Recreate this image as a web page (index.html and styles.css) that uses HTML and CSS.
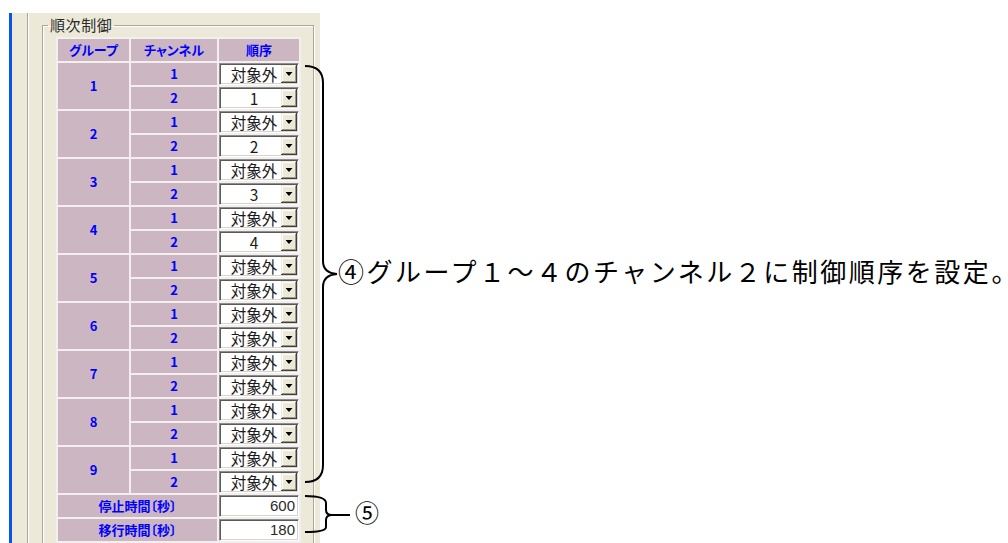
FILE: index.html
```html
<!DOCTYPE html>
<html lang="ja">
<head>
<meta charset="utf-8">
<title>順次制御</title>
<link rel="stylesheet" href="styles.css">
</head>
<body>
<div class="page">
  <div class="gutter"></div>
  <div class="window">
    <div class="rail"></div>
    <div class="pane">
      <fieldset class="group">
        <legend>順次制御</legend>
        <table class="grid">
          <thead>
            <tr><th class="c-grp">グループ</th><th class="c-ch">チャンネル</th><th class="c-ord">順序</th></tr>
          </thead>
          <tbody>
            <tr><td rowspan="2">1</td><td>1</td><td class="ord"><div class="combo"><span class="val">対象外</span><span class="btn"></span></div></td></tr>
            <tr><td>2</td><td class="ord"><div class="combo"><span class="val">1</span><span class="btn"></span></div></td></tr>
            <tr><td rowspan="2">2</td><td>1</td><td class="ord"><div class="combo"><span class="val">対象外</span><span class="btn"></span></div></td></tr>
            <tr><td>2</td><td class="ord"><div class="combo"><span class="val">2</span><span class="btn"></span></div></td></tr>
            <tr><td rowspan="2">3</td><td>1</td><td class="ord"><div class="combo"><span class="val">対象外</span><span class="btn"></span></div></td></tr>
            <tr><td>2</td><td class="ord"><div class="combo"><span class="val">3</span><span class="btn"></span></div></td></tr>
            <tr><td rowspan="2">4</td><td>1</td><td class="ord"><div class="combo"><span class="val">対象外</span><span class="btn"></span></div></td></tr>
            <tr><td>2</td><td class="ord"><div class="combo"><span class="val">4</span><span class="btn"></span></div></td></tr>
            <tr><td rowspan="2">5</td><td>1</td><td class="ord"><div class="combo"><span class="val">対象外</span><span class="btn"></span></div></td></tr>
            <tr><td>2</td><td class="ord"><div class="combo"><span class="val">対象外</span><span class="btn"></span></div></td></tr>
            <tr><td rowspan="2">6</td><td>1</td><td class="ord"><div class="combo"><span class="val">対象外</span><span class="btn"></span></div></td></tr>
            <tr><td>2</td><td class="ord"><div class="combo"><span class="val">対象外</span><span class="btn"></span></div></td></tr>
            <tr><td rowspan="2">7</td><td>1</td><td class="ord"><div class="combo"><span class="val">対象外</span><span class="btn"></span></div></td></tr>
            <tr><td>2</td><td class="ord"><div class="combo"><span class="val">対象外</span><span class="btn"></span></div></td></tr>
            <tr><td rowspan="2">8</td><td>1</td><td class="ord"><div class="combo"><span class="val">対象外</span><span class="btn"></span></div></td></tr>
            <tr><td>2</td><td class="ord"><div class="combo"><span class="val">対象外</span><span class="btn"></span></div></td></tr>
            <tr><td rowspan="2">9</td><td>1</td><td class="ord"><div class="combo"><span class="val">対象外</span><span class="btn"></span></div></td></tr>
            <tr><td>2</td><td class="ord"><div class="combo"><span class="val">対象外</span><span class="btn"></span></div></td></tr>
            <tr><td colspan="2">停止時間〔秒〕</td><td class="ord"><div class="field">600</div></td></tr>
            <tr><td colspan="2">移行時間〔秒〕</td><td class="ord"><div class="field">180</div></td></tr>
          </tbody>
        </table>
      </fieldset>
    </div>
  </div>
  <div class="annot">
    <div class="note note-big">
      <svg class="brace-big" width="34" height="418" viewBox="0 0 34 418"><path d="M1,1 Q19,1 19,18 L19,196 Q19,208 33,209 Q19,210 19,222 L19,400 Q19,417 1,417" fill="none" stroke="#000" stroke-width="2"/></svg>
      <span class="note-text">④グループ１～４のチャンネル２に制御順序を設定<span class="stop">。</span></span>
    </div>
    <div class="note note-small">
      <svg class="brace-small" width="48" height="40" viewBox="0 0 48 40"><path d="M1,2 Q22,2 22,9 L22,16 Q22,21 28,21 L46,21 M28,21 Q22,21 22,26 L22,33 Q22,38 1,38" fill="none" stroke="#000" stroke-width="2"/></svg>
      <span class="note-num">⑤</span>
    </div>
  </div>
</div>
</body>
</html>
```

FILE: styles.css
```css
html, body {
  margin: 0;
  padding: 0;
  background: #fff;
}
body {
  font-family: "Noto Sans CJK JP", "Noto Sans", sans-serif;
  width: 1008px;
  height: 543px;
  overflow: hidden;
}
.page {
  display: flex;
  align-items: flex-start;
}
.gutter {
  width: 9px;
  flex: none;
}
.window {
  flex: none;
  width: 308px;
  height: 530px;
  margin-top: 13px;
  border-left: 3px solid #0B55E6;
  background: #ECE9D8;
  display: flex;
  overflow: hidden;
}
.rail {
  width: 15px;
  flex: none;
}
.pane {
  flex: 1;
  border-left: 1px solid #ACA899;
  box-shadow: inset 1px 0 0 #fff;
  padding: 4px 6px 0 14px;
}
.group {
  margin: 0;
  padding: 4px 0 0 5px;
  border: 1px solid #A9A79B;
  box-shadow: inset 1px 1px 0 #fff, 1px 1px 0 #fff;
  height: 600px;
  min-width: 0;
}
.group legend {
  padding: 0 2px;
  font-size: 15px;
  line-height: 16px;
  color: #2a2a2a;
  letter-spacing: 0.6px;
}
.grid {
  margin-left: 8px;
  border-collapse: separate;
  border-spacing: 2px;
  background: #F3EFF1;
  table-layout: fixed;
}
.grid th, .grid td {
  padding: 0;
  height: 22px;
  background: #CCB6C1;
  color: #0000FF;
  font-weight: bold;
  font-size: 13px;
  line-height: 22px;
  text-align: center;
  font-feature-settings: "palt" 1;
}
.c-grp { width: 71px; }
.c-ch { width: 86px; }
.c-ord { width: 80px; }
.grid td.ord {
  background: #fff;
}
.combo {
  box-sizing: border-box;
  height: 22px;
  display: flex;
  align-items: stretch;
  border: 1px solid;
  border-color: #8E8E8E #fff #fff #8E8E8E;
  box-shadow: inset 1px 1px 0 #5a5a5a, inset -1px -1px 0 #D8D4C8;
  background: #fff;
  padding: 1px;
}
.val {
  flex: 1;
  font-weight: normal;
  color: #1a1a1a;
  font-size: 15.5px;
  line-height: 18px;
  text-align: center;
  padding-left: 6px;
}
.btn {
  width: 16px;
  flex: none;
  background: #ECE9D8;
  box-shadow: inset -1px -1px 0 #404040, inset 1px 1px 0 #ECE9D8, inset -2px -2px 0 #9a9a90, inset 2px 2px 0 #fff;
  display: flex;
  align-items: center;
  justify-content: center;
}
.btn::after {
  content: "";
  width: 7px;
  height: 4px;
  background: #000;
  clip-path: polygon(0 0, 100% 0, 50% 100%);
}
.field {
  box-sizing: border-box;
  height: 22px;
  border: 1px solid;
  border-color: #8E8E8E #fff #fff #8E8E8E;
  box-shadow: inset 1px 1px 0 #5a5a5a, inset -1px -1px 0 #D8D4C8;
  background: #fff;
  font-weight: normal;
  color: #2a2a2a;
  font-size: 15px;
  line-height: 20px;
  text-align: right;
  padding-right: 3px;
  font-family: "Liberation Sans", sans-serif;
}
.annot {
  flex: 1;
  margin-left: -16px;
  display: flex;
  flex-direction: column;
  position: relative;
}
.note {
  display: flex;
  align-items: center;
}
.note-big {
  margin-top: 65px;
  height: 418px;
}
.note-small {
  margin-top: 11px;
  height: 40px;
}
.note svg {
  flex: none;
  display: block;
}
.note-text {
  white-space: nowrap;
  font-family: "Liberation Serif", "Noto Sans CJK JP", serif;
  font-size: 26px;
  letter-spacing: 2.5px;
  color: #000;
  line-height: 30px;
}
.note-text .stop {
  letter-spacing: 0;
  font-feature-settings: "palt" 1;
}
.note-num {
  margin-left: 3px;
  font-family: "Liberation Serif", "Noto Sans CJK JP", serif;
  font-size: 24px;
  line-height: 30px;
  color: #000;
}
```
